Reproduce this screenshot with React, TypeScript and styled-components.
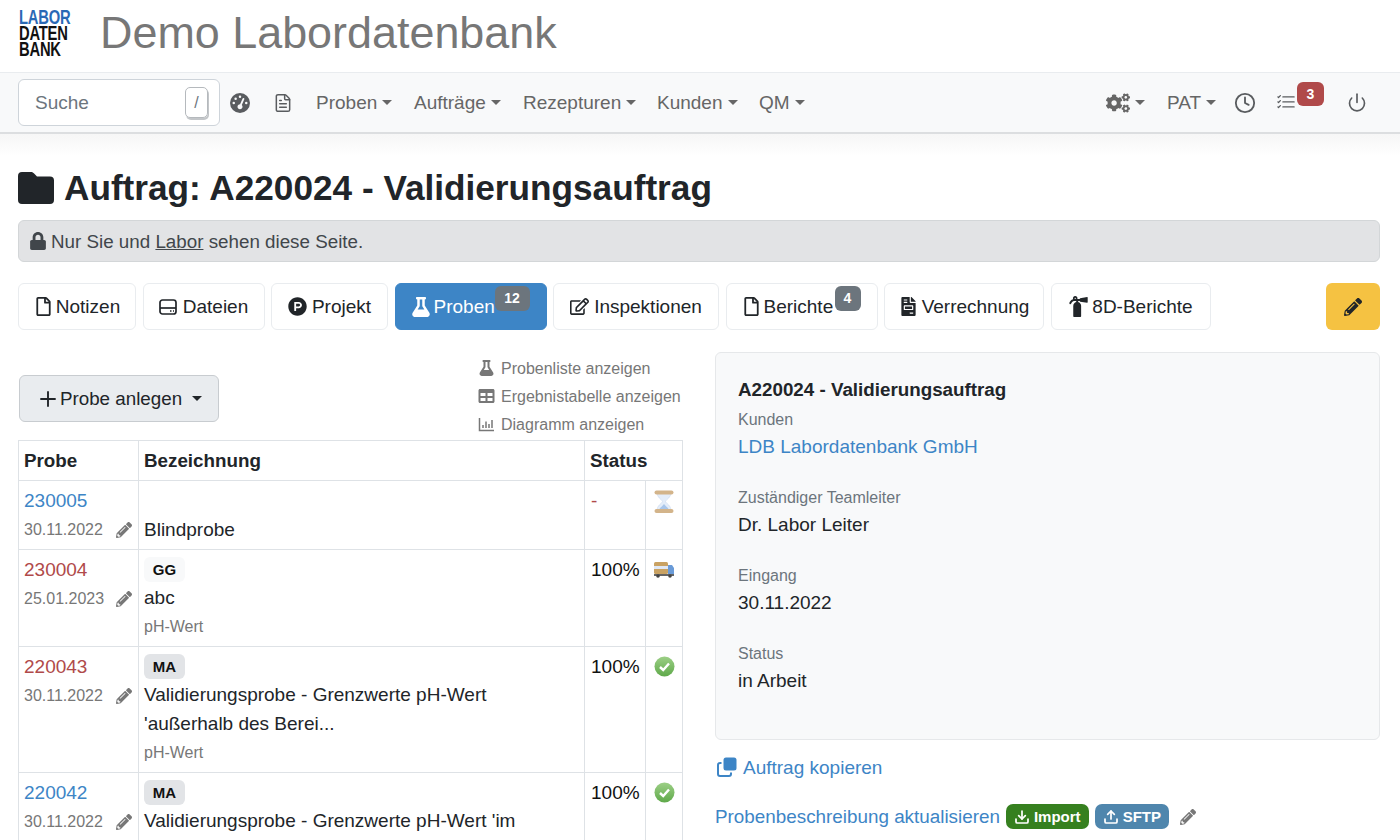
import React from "react";
import styled, { createGlobalStyle } from "styled-components";
import { FaCogs, FaLock, FaFlask, FaPencilAlt, FaProductHunt, FaFireExtinguisher, FaFileInvoice, FaTable, FaRegFile, FaRegEdit } from "react-icons/fa";
import { FaGaugeHigh } from "react-icons/fa6";
import { FiClock, FiPower } from "react-icons/fi";
import { BsListCheck } from "react-icons/bs";
import { FileText, Plus, Download, Upload } from "lucide-react";

const Global = createGlobalStyle`
  html, body { margin: 0; padding: 0; background: #fff; }
  body { font-family: "Liberation Sans", Arial, sans-serif; font-size: 19px; line-height: 27px; color: #212529; width: 1400px; height: 840px; overflow: hidden; }
  * { box-sizing: border-box; }
`;

const Header = styled.header`
  height: 72px; display: flex; align-items: center; padding-left: 18px; gap: 28px; background: #fff;
`;
const LogoBox = styled.div`
  width: 53px; height: 48px; margin-top: -6px; padding-left: 1px; display: flex; flex-direction: column; overflow: visible;
`;
const LogoLine = styled.span<{ $blue?: boolean }>`
  display: block; height: 16px; line-height: 16px; font-size: 20.5px; font-weight: 700; white-space: nowrap; letter-spacing: -0.3px;
  color: ${p => p.$blue ? "#2a69b5" : "#111"}; transform: scaleX(0.72); transform-origin: left center;
`;
const Brand = styled.h2`
  margin: 0; font-size: 44.9px; line-height: 64px; font-weight: 400; color: #777; position: relative; top: -3px; left: 1px;
`;
const Nav = styled.nav`
  height: 62px; display: flex; align-items: center; padding: 0 33px 0 18px; background: #f8f9fa;
  border-top: 1px solid #e9ecef; border-bottom: 2px solid #dcdee0;
`;
const SearchBox = styled.div`
  width: 202px; height: 47px; border: 1px solid #ced4da; border-radius: 6px; background: #fff; color: #6c757d;
  display: flex; align-items: center; justify-content: space-between; padding: 0 11px 0 16px; margin-right: 10px;
`;
const Key = styled.span`
  width: 23px; height: 31px; border: 1px solid #b5b9bd; border-radius: 5px; box-shadow: 1px 2px 0 #c3c6c9;
  display: flex; align-items: center; justify-content: center; color: #6c757d; font-size: 16px;
`;
const NavIcon = styled.span<{ $w: number; $ml?: number }>`
  width: ${p => p.$w}px; margin-left: ${p => p.$ml ?? 0}px; display: flex; align-items: center; justify-content: center; color: #595c5f; position: relative; font-size: 20px;
`;
const NavLink = styled.span<{ $w: number }>`
  width: ${p => p.$w}px; color: #666; display: inline-flex; align-items: center;
`;
const Caret = styled.i`
  display: inline-block; margin-left: 5px; border-top: 5.5px solid currentColor; border-left: 5.5px solid transparent; border-right: 5.5px solid transparent;
`;
const AddCaret = styled(Caret)` margin-left: 10px; `;
const Spacer = styled.div` flex: 1; `;
const NavBadge = styled.span`
  position: absolute; left: 21px; top: -9px; width: 27px; height: 24px; border-radius: 6px; background: #b04a4a; color: #fff;
  font-size: 14px; font-weight: 700; display: flex; align-items: center; justify-content: center;
`;
const Main = styled.main`
  padding: 0 20px 0 18px; background: linear-gradient(#f6f6f6, #fff 22px);
`;
const Title = styled.h1`
  margin: 0; padding-top: 30px; height: 86px; font-size: 35.2px; line-height: 47px; font-weight: 700; display: flex; align-items: flex-start; gap: 10px;
  svg { margin-top: 8px; flex: none; }
`;
const Notice = styled.div`
  height: 42px; background: #e2e3e5; border: 1px solid #d3d6d8; border-radius: 6px; color: #41464b; font-size: 18.8px;
  display: flex; align-items: center; padding-left: 10px; gap: 4px;
`;
const Tabs = styled.div`
  display: flex; margin-top: 21px; height: 47px; gap: 6.5px;
`;
const Tab = styled.div<{ $w: number; $on?: boolean; $left?: boolean; $gap: number }>`
  position: relative; width: ${p => p.$w}px; height: 47px; border-radius: 6px; flex: none;
  border: 1px solid ${p => p.$on ? "#3d85c6" : "#e9ecef"}; background: ${p => p.$on ? "#3d85c6" : "#fff"}; color: ${p => p.$on ? "#fff" : "#212529"};
  display: flex; align-items: center; justify-content: ${p => p.$left ? "flex-start" : "center"}; padding-left: ${p => p.$left ? 15 : 0}px; gap: ${p => p.$gap}px;
`;
const TabBadge = styled.span<{ $w: number; $x: number }>`
  position: absolute; left: ${p => p.$x}px; top: 2px; width: ${p => p.$w}px; height: 25px; border-radius: 6px; background: #6c757d; color: #fff;
  font-size: 14px; font-weight: 700; display: flex; align-items: center; justify-content: center;
`;
const EditBtn = styled.div`
  margin-left: auto; width: 54px; height: 47px; border-radius: 6px; background: #f5c242; display: flex; align-items: center; justify-content: center; color: #212529;
`;
const Columns = styled.div`
  display: grid; grid-template-columns: 664px 665px; justify-content: space-between; margin-top: 22px;
`;
const LeftCol = styled.div` width: 664px; `;
const Tools = styled.div`
  height: 88px; display: flex; justify-content: space-between; padding-left: 1px;
`;
const AddBtn = styled.div`
  margin-top: 23px; width: 200px; height: 47px; border: 1px solid #c8ccd0; border-radius: 6px; background: #e9ecef; color: #212529; font-size: 18.8px;
  display: flex; align-items: center; justify-content: center; gap: 0;
`;
const ViewList = styled.div`
  display: flex; flex-direction: column; margin-top: 2px; width: 204px; padding-right: 1px;
`;
const ViewItem = styled.div`
  height: 28px; display: flex; align-items: center; gap: 6px; color: #777; font-size: 16px; white-space: nowrap;
  svg { width: 17px; flex: none; }
`;
const Table = styled.table`
  border-collapse: collapse; width: 664px; table-layout: fixed;
  th, td { border: 1px solid #dee2e6; padding: 5px; vertical-align: top; font-weight: 400; text-align: left; }
  th { font-weight: 700; font-size: 18.8px; height: 40px; padding: 0 5px; vertical-align: middle; }
`;
const SampleLink = styled.div<{ $red?: boolean }>`
  color: ${p => p.$red ? "#b04a4a" : "#3d85c6"}; height: 29px; line-height: 29px;
`;
const DateLine = styled.div`
  color: #777; font-size: 16px; height: 29px; display: flex; align-items: center; justify-content: space-between; padding-right: 1px;
`;
const Tag = styled.span<{ $light?: boolean }>`
  display: flex; width: 41px; height: 25px; border-radius: 6px; align-items: center; justify-content: center; margin: 2px 0 1px;
  background: ${p => p.$light ? "#f8f9fa" : "#e2e4e7"}; color: #111; font-size: 15px; font-weight: 700;
`;
const Gap = styled.div` height: 29px; `;
const Desc = styled.div` line-height: 29px; white-space: nowrap; `;
const Sub = styled.div` color: #777; font-size: 16px; height: 29px; display: flex; align-items: center; `;
const PctCell = styled.td<{ $dash?: boolean }>`
  color: ${p => p.$dash ? "#b04a4a" : "#111"};
  && { padding: 6px 5px 4px 6px; }
`;
const IconCell = styled.td` && { padding: 6px 0 4px; } `;
const StatusIcon = styled.div` display: flex; justify-content: center; padding-top: 3px; `;
const Card = styled.section`
  height: 388px; background: #f8f9fa; border: 1px solid #e6e8ea; border-radius: 6px; padding: 23px 22px;
`;
const CardTitle = styled.div` font-weight: 700; font-size: 18.8px; line-height: 28px; margin-bottom: 3px; `;
const Label = styled.div` color: #6c757d; font-size: 16px; line-height: 26px; `;
const Value = styled.div<{ $link?: boolean }>` color: ${p => p.$link ? "#3d85c6" : "#212529"}; line-height: 28px; margin-bottom: 24px; `;
const CopyLink = styled.div`
  margin: 13px 0 0 2px; height: 28px; color: #3d85c6; display: flex; align-items: center; gap: 6px;
`;
const UpdateRow = styled.div`
  margin-top: 22px; display: flex; align-items: center; color: #3d85c6; gap: 6px; font-size: 18.85px;
`;
const Pill = styled.span<{ $c: string }>`
  height: 25px; border-radius: 7px; padding: 0 8px; background: ${p => p.$c}; color: #fff; font-size: 15px; font-weight: 700;
  display: inline-flex; align-items: center; gap: 4px;
`;
const RowPencil = styled(FaPencilAlt)` margin-left: 5px; color: #777; `;

const Logo = () => (
  <LogoBox>
    <LogoLine $blue>LABOR</LogoLine>
    <LogoLine>DATEN</LogoLine>
    <LogoLine>BANK</LogoLine>
  </LogoBox>
);

const FolderIcon = () => (
  <svg width="36" height="32" viewBox="0 0 36 32">
    <path d="M4 0h9c1.400 0 2.300.6 3.100 1.500L19 4.500h13a4 4 0 0 1 4 4V28a4 4 0 0 1-4 4H4a4 4 0 0 1-4-4V4a4 4 0 0 1 4-4z" fill="#212529" />
  </svg>
);
const DriveIcon = () => (
  <svg width="18" height="16" viewBox="0 0 18 16" fill="none" stroke="#212529" strokeWidth="1.700">
    <rect x="1" y="1" width="16" height="14" rx="2.500" />
    <path d="M1 9h16" />
    <path d="M11 12h1.500M14 12h1" strokeWidth="1.500" />
  </svg>
);
const ChartIcon = () => (
  <svg width="17" height="16" viewBox="0 0 17 16" fill="none" stroke="#777" strokeWidth="1.500">
    <path d="M1.500 2v12.500H16" />
    <path d="M5 12V9M8 12V5.500M11 12V8M14 12V4" />
  </svg>
);
const CopyIcon = () => (
  <svg width="20" height="20" viewBox="0 0 20 20">
    <rect x="6.500" y="0.500" width="13" height="13" rx="2.500" fill="#3d85c6" />
    <path d="M4.500 6H3a2 2 0 0 0-2 2v9a2 2 0 0 0 2 2h9a2 2 0 0 0 2-2v-1.500" fill="none" stroke="#3d85c6" strokeWidth="2" />
  </svg>
);

const Hourglass = () => (
  <svg width="24" height="24" viewBox="0 1 24 24">
    <path d="M5 3h14c0 6-4.500 7-5.500 9.500 1 2.500 5.500 3.500 5.500 9.500H5c0-6 4.500-7 5.500-9.500C9.500 10 5 9 5 3z" fill="#e4edf9" stroke="#c2d3ea" strokeWidth="0.500" />
    <path d="M7 21c1-3 4-4 5-6 1 2 4 3 5 6z" fill="#a9c6ea" />
    <rect x="2.500" y="1.500" width="19" height="4" rx="2" fill="#d3b48a" />
    <rect x="2.500" y="20" width="19" height="4" rx="2" fill="#d3b48a" />
  </svg>
);
const Truck = () => (
  <svg width="22" height="20" viewBox="0 -2 22 20">
    <rect x="1" y="1" width="14" height="12" rx="1.500" fill="#c9a263" />
    <rect x="1" y="5" width="14" height="3" fill="#dfe8f5" />
    <path d="M15 4h4l2 3v7h-6z" fill="#6a9bd8" />
    <rect x="1" y="13" width="20" height="2" fill="#666" />
    <circle cx="5" cy="15" r="1.800" fill="#444" /><circle cx="17" cy="15" r="1.800" fill="#444" />
  </svg>
);
const Check = () => (
  <svg width="21" height="21" viewBox="0 0 21 21">
    <defs>
      <linearGradient id="chk" x1="0" y1="0" x2="0" y2="1">
        <stop offset="0" stopColor="#9ccf86" />
        <stop offset="1" stopColor="#5fa94a" />
      </linearGradient>
    </defs>
    <circle cx="10.500" cy="10.500" r="10" fill="url(#chk)" />
    <path d="M6 11l3.200 3L15 7.500" fill="none" stroke="#fff" strokeWidth="2.400" />
  </svg>
);

type Row = { id: string; red?: boolean; date: string; tag?: string; light?: boolean; desc: string[]; sub?: string; pct: string; icon: React.ReactNode; spacer?: boolean };
const rows: Row[] = [
  { id: "230005", date: "30.11.2022", desc: ["Blindprobe"], pct: "-", icon: <Hourglass />, spacer: true },
  { id: "230004", red: true, date: "25.01.2023", tag: "GG", light: true, desc: ["abc"], sub: "pH-Wert", pct: "100%", icon: <Truck /> },
  { id: "220043", red: true, date: "30.11.2022", tag: "MA", desc: ["Validierungsprobe - Grenzwerte pH-Wert", "'außerhalb des Berei..."], sub: "pH-Wert", pct: "100%", icon: <Check /> },
  { id: "220042", date: "30.11.2022", tag: "MA", desc: ["Validierungsprobe - Grenzwerte pH-Wert 'im"], pct: "100%", icon: <Check /> },
];

export default function App() {
  return (
    <>
      <Global />
      <Header><Logo /><Brand>Demo Labordatenbank</Brand></Header>
      <Nav>
        <SearchBox>Suche<Key>/</Key></SearchBox>
        <NavIcon $w={20}><FaGaugeHigh /></NavIcon>
        <NavIcon $w={66}><FileText size={20} strokeWidth={1.800} /></NavIcon>
        <NavLink $w={98}>Proben<Caret /></NavLink>
        <NavLink $w={109}>Aufträge<Caret /></NavLink>
        <NavLink $w={134}>Rezepturen<Caret /></NavLink>
        <NavLink $w={102}>Kunden<Caret /></NavLink>
        <NavLink $w={50}>QM<Caret /></NavLink>
        <Spacer />
        <NavLink $w={61}><FaCogs size={24} /><Caret /></NavLink>
        <NavLink $w={66}>PAT<Caret /></NavLink>
        <NavIcon $w={24}><FiClock size={22} /></NavIcon>
        <NavIcon $w={20} $ml={19}><BsListCheck size={23} /><NavBadge>3</NavBadge></NavIcon>
        <NavIcon $w={20} $ml={51}><FiPower size={23} /></NavIcon>
      </Nav>
      <Main>
        <Title><FolderIcon />Auftrag: A220024 - Validierungsauftrag</Title>
        <Notice><FaLock size={18} /><span>Nur Sie und <u>Labor</u> sehen diese Seite.</span></Notice>
        <Tabs>
          <Tab $w={118} $gap={3}><FaRegFile size={19} />Notizen</Tab>
          <Tab $w={122} $gap={6}><DriveIcon />Dateien</Tab>
          <Tab $w={117} $gap={5}><FaProductHunt size={19} />Projekt</Tab>
          <Tab $w={152} $gap={3} $on $left><FaFlask size={20} />Proben<TabBadge $w={35} $x={99}>12</TabBadge></Tab>
          <Tab $w={166} $gap={5}><FaRegEdit size={19} />Inspektionen</Tab>
          <Tab $w={152} $gap={3} $left><FaRegFile size={19} />Berichte<TabBadge $w={26} $x={108}>4</TabBadge></Tab>
          <Tab $w={160} $gap={4}><FaFileInvoice size={19} />Verrechnung</Tab>
          <Tab $w={160} $gap={3}><FaFireExtinguisher size={21} />8D-Berichte</Tab>
          <EditBtn><FaPencilAlt size={18} /></EditBtn>
        </Tabs>
        <Columns>
          <LeftCol>
            <Tools>
              <AddBtn><Plus size={24} strokeWidth={1.900} />Probe anlegen<AddCaret /></AddBtn>
              <ViewList>
                <ViewItem><FaFlask size={16} />Probenliste anzeigen</ViewItem>
                <ViewItem><FaTable size={16} />Ergebnistabelle anzeigen</ViewItem>
                <ViewItem><ChartIcon />Diagramm anzeigen</ViewItem>
              </ViewList>
            </Tools>
            <Table>
              <colgroup><col width="120" /><col width="446" /><col width="61" /><col width="37" /></colgroup>
              <thead><tr><th>Probe</th><th>Bezeichnung</th><th colSpan={2}>Status</th></tr></thead>
              <tbody>
                {rows.map(r => (
                  <tr key={r.id}>
                    <td>
                      <SampleLink $red={r.red}>{r.id}</SampleLink>
                      <DateLine>{r.date}<FaPencilAlt size={16} color="#777" /></DateLine>
                    </td>
                    <td>
                      {r.spacer && <Gap />}
                      {r.tag && <Tag $light={r.light}>{r.tag}</Tag>}
                      {r.desc.map(d => <Desc key={d}>{d}</Desc>)}
                      {r.sub && <Sub>{r.sub}</Sub>}
                    </td>
                    <PctCell $dash={r.pct === "-"}>{r.pct}</PctCell>
                    <IconCell><StatusIcon>{r.icon}</StatusIcon></IconCell>
                  </tr>
                ))}
              </tbody>
            </Table>
          </LeftCol>
          <div>
            <Card>
              <CardTitle>A220024 - Validierungsauftrag</CardTitle>
              <Label>Kunden</Label>
              <Value $link>LDB Labordatenbank GmbH</Value>
              <Label>Zuständiger Teamleiter</Label>
              <Value>Dr. Labor Leiter</Value>
              <Label>Eingang</Label>
              <Value>30.11.2022</Value>
              <Label>Status</Label>
              <Value>in Arbeit</Value>
            </Card>
            <CopyLink><CopyIcon />Auftrag kopieren</CopyLink>
            <UpdateRow>
              Probenbeschreibung aktualisieren
              <Pill $c="#36801f"><Download size={16} strokeWidth={2.600} />Import</Pill>
              <Pill $c="#4f86ad"><Upload size={16} strokeWidth={2.600} />SFTP</Pill>
              <RowPencil size={16} />
            </UpdateRow>
          </div>
        </Columns>
      </Main>
    </>
  );
}
